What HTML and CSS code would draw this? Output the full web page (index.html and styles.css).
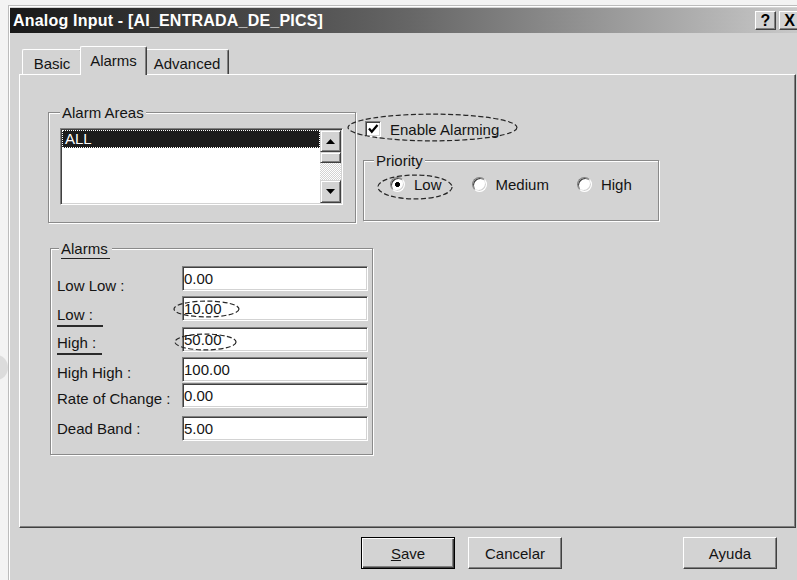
FILE: index.html
```html
<!DOCTYPE html>
<html lang="en">
<head>
<meta charset="utf-8">
<title>Analog Input - [AI_ENTRADA_DE_PICS]</title>
<link rel="stylesheet" href="styles.css">
</head>
<body>
<div class="window">
  <div class="titlebar">
    <span class="title">Analog Input - [AI_ENTRADA_DE_PICS]</span>
    <div class="caption-btns">
      <span class="cbtn">?</span>
      <span class="cbtn">X</span>
    </div>
  </div>

  <div class="dialog-body">
    <div class="tabs">
      <div class="tab tab-basic">Basic</div>
      <div class="tab tab-active">Alarms</div>
      <div class="tab tab-advanced">Advanced</div>
    </div>

    <div class="panel">
      <div class="top-row">
        <div class="group areas">
          <div class="legend legend-areas">Alarm Areas</div>
          <div class="listbox">
            <div class="list-items">
              <div class="item selected">ALL</div>
            </div>
            <div class="vscroll">
              <div class="sbtn sbtn-up">
                <svg width="9" height="5" viewBox="0 0 9 5"><polygon points="0,5 4.5,0 9,5" fill="#000"/></svg>
              </div>
              <div class="thumb"></div>
              <div class="track"></div>
              <div class="sbtn sbtn-down">
                <svg width="9" height="5" viewBox="0 0 9 5"><polygon points="0,0 9,0 4.5,5" fill="#000"/></svg>
              </div>
            </div>
          </div>
        </div>

        <div class="side">
          <div class="check-row">
            <span class="checkbox">
              <svg width="12" height="12" viewBox="0 0 12 12"><polyline points="2,5.5 4.8,8.8 10.5,2" fill="none" stroke="#000" stroke-width="2.2"/></svg>
            </span>
            <span class="check-text">Enable Alarming</span>
            <span class="mark mark-enable"><svg><ellipse cx="50%" cy="50%" rx="49.4%" ry="46%"/></svg></span>
          </div>

          <div class="group priority">
            <div class="legend legend-priority">Priority</div>
            <div class="radios">
              <span class="radio-opt"><span class="radio on"></span>Low<span class="mark mark-low"><svg><ellipse cx="50%" cy="50%" rx="48.8%" ry="46%"/></svg></span></span>
              <span class="radio-opt"><span class="radio"></span>Medium</span>
              <span class="radio-opt opt-high"><span class="radio"></span>High</span>
            </div>
          </div>
        </div>
      </div>

      <div class="group alarms">
        <div class="legend legend-alarms"><span class="ul">Alarms</span></div>
        <div class="rows">
          <div class="row r1"><span class="lbl">Low Low :</span><div class="field">0.00</div></div>
          <div class="row r2"><span class="lbl"><span class="ul-mark ul-low">Low :</span></span><div class="field">10.00<span class="mark mark-10"><svg><ellipse cx="50%" cy="50%" rx="48.5%" ry="44%"/></svg></span></div></div>
          <div class="row r3"><span class="lbl"><span class="ul-mark ul-high">High :</span></span><div class="field">50.00<span class="mark mark-50"><svg><ellipse cx="50%" cy="50%" rx="48.5%" ry="44%"/></svg></span></div></div>
          <div class="row r4"><span class="lbl">High High :</span><div class="field">100.00</div></div>
          <div class="row r5"><span class="lbl">Rate of Change :</span><div class="field">0.00</div></div>
          <div class="row r6"><span class="lbl">Dead Band :</span><div class="field">5.00</div></div>
        </div>
      </div>
    </div>

    <div class="actions">
      <button class="btn btn-default"><span class="u">S</span>ave</button>
      <button class="btn btn-cancel">Cancelar</button>
      <button class="btn btn-help">Ayuda</button>
    </div>
  </div>
</div>
</body>
</html>
```

FILE: styles.css
```css
html, body {
  margin: 0;
  height: 580px;
  overflow: hidden;
}

body {
  position: relative;
  background: #f3f3f3;
  font-family: "Liberation Sans", Arial, sans-serif;
  font-size: 15px;
  color: #141414;
}

/* faint shape peeking in at the left page edge */
body::before {
  content: "";
  position: absolute;
  left: -14px;
  top: 355px;
  width: 22px;
  height: 25px;
  border-radius: 50%;
  background: #dcdcdc;
}

/* ---------- window frame ---------- */
.window {
  position: relative;
  box-sizing: border-box;
  width: 800px;
  height: 600px;
  margin: 5px 0 0 8px;
  padding: 2px 0 0 1px;
  background: #d3d3d3;
  border-top: 1px solid #bcbcbc;
  border-left: 1px solid #bcbcbc;
  box-shadow: inset 1px 1px 0 #fff;
}

.titlebar {
  height: 25px;
  display: flex;
  align-items: center;
  justify-content: space-between;
  padding: 0 8px 0 3px;
  background: linear-gradient(90deg, #181818 0%, #666 50%, #cbcbcb 100%);
}

.title {
  color: #fff;
  font-weight: bold;
  font-size: 16px;
  letter-spacing: 0.2px;
  white-space: nowrap;
}

.caption-btns {
  display: flex;
  gap: 3px;
}

.cbtn {
  box-sizing: border-box;
  width: 21px;
  height: 19px;
  display: flex;
  align-items: center;
  justify-content: center;
  background: #d3d3d3;
  border: 1px solid;
  border-color: #fff #404040 #404040 #fff;
  box-shadow: inset -1px -1px 0 #808080;
  font-weight: bold;
  font-size: 16px;
  color: #000;
}

/* ---------- tabs ---------- */
.dialog-body {
  padding: 13px 0 0 9px;
}

.tabs {
  display: flex;
  align-items: flex-end;
  height: 29px;
  margin-bottom: -1px;
  padding-left: 3px;
}

.tab {
  box-sizing: border-box;
  height: 25px;
  margin-bottom: 1px;
  padding-top: 5px;
  line-height: 18px;
  text-align: center;
  background: #d3d3d3;
  border: 1px solid;
  border-color: #fff #404040 transparent #fff;
  border-bottom: none;
  border-radius: 2px 2px 0 0;
  box-shadow: inset -1px 0 0 #808080;
}

.tab-basic { width: 60px; }
.tab-advanced { width: 84px; }

.tab-active {
  position: relative;
  z-index: 1;
  width: 67px;
  height: 29px;
  margin: 0 -2px 0 -2px;
}

.panel {
  box-sizing: border-box;
  width: 777px;
  height: 454px;
  padding: 37px 0 0 28px;
  border: 1px solid;
  border-color: #fff #404040 #404040 #fff;
  box-shadow: inset -1px -1px 0 #808080;
}

/* ---------- group boxes ---------- */
.top-row {
  display: flex;
  align-items: flex-start;
}

.group {
  box-sizing: border-box;
  border: 1px solid #8a8a8a;
  box-shadow: 1px 1px 0 #fff, inset 1px 1px 0 #fff;
}

.legend {
  display: table;
  margin-top: -9px;
  padding: 0 2px;
  line-height: 18px;
  background: #d3d3d3;
  white-space: nowrap;
}

.legend-areas { margin-left: 11px; }
.legend-priority { margin-left: 10px; }
.legend-alarms { margin-left: 8px; }

.ul {
  border-bottom: 1px solid #222;
  padding: 0 2px 1px 0;
}

.areas {
  width: 308px;
  height: 111px;
}

/* list box with its scroll bar */
.listbox {
  box-sizing: border-box;
  width: 283px;
  height: 77px;
  margin: 6px 0 0 11px;
  padding: 1px;
  display: flex;
  background: #fff;
  border: 1px solid;
  border-color: #808080 #fff #fff #808080;
  box-shadow: inset 1px 1px 0 #404040, inset -1px -1px 0 #d3d3d3;
}

.list-items {
  flex: 1;
}

.item {
  height: 18px;
  line-height: 18px;
  padding-left: 3px;
}

.item.selected {
  background: #1c1c1c;
  color: #fff;
  outline: 1px dotted #fff;
  outline-offset: -1px;
}

.vscroll {
  width: 21px;
  display: flex;
  flex-direction: column;
}

.sbtn,
.thumb {
  box-sizing: border-box;
  background: #d3d3d3;
  border: 1px solid;
  border-color: #d3d3d3 #404040 #404040 #d3d3d3;
  box-shadow: inset 1px 1px 0 #fff, inset -1px -1px 0 #808080;
}

.sbtn {
  display: flex;
  align-items: center;
  justify-content: center;
}

.sbtn-up { height: 22px; }
.sbtn-down { height: 23px; }
.thumb { height: 11px; }

.track {
  flex: 1;
  background: repeating-conic-gradient(#fff 0 25%, #d3d3d3 0 50%) 0 0 / 2px 2px;
}

/* right column: check box and priority */
.side {
  margin-left: 7px;
}

.check-row {
  position: relative;
  display: flex;
  align-items: center;
  height: 20px;
  margin-top: 7px;
}

.checkbox {
  box-sizing: border-box;
  width: 16px;
  height: 16px;
  margin-left: 2px;
  display: flex;
  align-items: center;
  justify-content: center;
  background: #fff;
  border: 1px solid;
  border-color: #808080 #fff #fff #808080;
  box-shadow: inset 1px 1px 0 #404040, inset -1px -1px 0 #d3d3d3;
}

.check-text {
  margin-left: 9px;
}

.priority {
  width: 296px;
  height: 61px;
  margin-top: 21px;
}

.radios {
  display: flex;
  align-items: center;
  gap: 30px;
  height: 20px;
  margin-top: 4px;
  padding-left: 26px;
}

.radio-opt {
  position: relative;
  display: flex;
  align-items: center;
}

.opt-high { margin-left: -2px; }

.radio {
  box-sizing: border-box;
  width: 15px;
  height: 15px;
  margin-right: 9px;
  border-radius: 50%;
  background: #fff;
  border: 1px solid;
  border-color: #808080 #fff #fff #808080;
  box-shadow: inset 1px 1px 0 #404040, inset -1px -1px 0 #d3d3d3;
}

.radio.on {
  background: radial-gradient(circle, #000 0 2.2px, #fff 2.8px);
}

/* alarm limits */
.alarms {
  width: 323px;
  height: 207px;
  margin: 25px 0 0 2px;
}

.rows {
  margin-top: 8px;
  padding-left: 6px;
}

.row {
  display: flex;
  align-items: flex-start;
  height: 25px;
}

.r2 { margin-top: 5px; }
.r3 { margin-top: 6px; }
.r4 { margin-top: 5px; }
.r5 { margin-top: 1px; }
.r6 { margin-top: 8px; }

.lbl {
  width: 125px;
  flex: none;
  line-height: 25px;
  white-space: nowrap;
}

.r1 .lbl { padding-top: 7px; }
.r2 .lbl { padding-top: 6px; }
.r3 .lbl { padding-top: 3px; }
.r4 .lbl { padding-top: 3px; }
.r5 .lbl { padding-top: 3px; }
.r6 .lbl { padding-top: 0; }

.ul-mark {
  border-bottom: 2px solid #2a2a2a;
  padding-bottom: 2px;
}

.ul-low { padding-right: 10px; }
.ul-high { padding-right: 6px; }

.field {
  position: relative;
  box-sizing: border-box;
  width: 186px;
  height: 25px;
  padding-left: 1px;
  line-height: 23px;
  background: #fff;
  border: 1px solid;
  border-color: #808080 #fff #fff #808080;
  box-shadow: inset 1px 1px 0 #404040, inset -1px -1px 0 #d3d3d3;
}

/* dashed ellipses drawn over the controls */
.mark {
  position: absolute;
  pointer-events: none;
}

.mark svg {
  display: block;
  width: 100%;
  height: 100%;
  overflow: visible;
}

.mark ellipse {
  fill: none;
  stroke: #262626;
  stroke-width: 1.2;
  stroke-dasharray: 5 2.5;
}

.mark-enable { left: -16px; top: -6px; width: 171px; height: 29px; }
.mark-low { left: -13px; top: -2px; width: 76px; height: 26px; }
.mark-10 { left: -10px; top: 3px; width: 67px; height: 18px; }
.mark-50 { left: -9px; top: 5px; width: 63px; height: 18px; }

/* ---------- dialog buttons ---------- */
.actions {
  display: flex;
  margin-top: 9px;
  padding-left: 342px;
}

.btn {
  box-sizing: border-box;
  width: 94px;
  height: 32px;
  padding: 0;
  font-family: inherit;
  font-size: 15px;
  color: #141414;
  background: #d3d3d3;
  border: 1px solid;
  border-color: #fff #404040 #404040 #fff;
  box-shadow: inset -1px -1px 0 #808080;
}

.btn-default {
  border: 1px solid #000;
  box-shadow: inset 1px 1px 0 #fff, inset -1px -1px 0 #404040, inset -2px -2px 0 #808080;
}

.btn-cancel { margin-left: 13px; }
.btn-help { margin-left: 121px; }

.u {
  text-decoration: underline;
}
```
